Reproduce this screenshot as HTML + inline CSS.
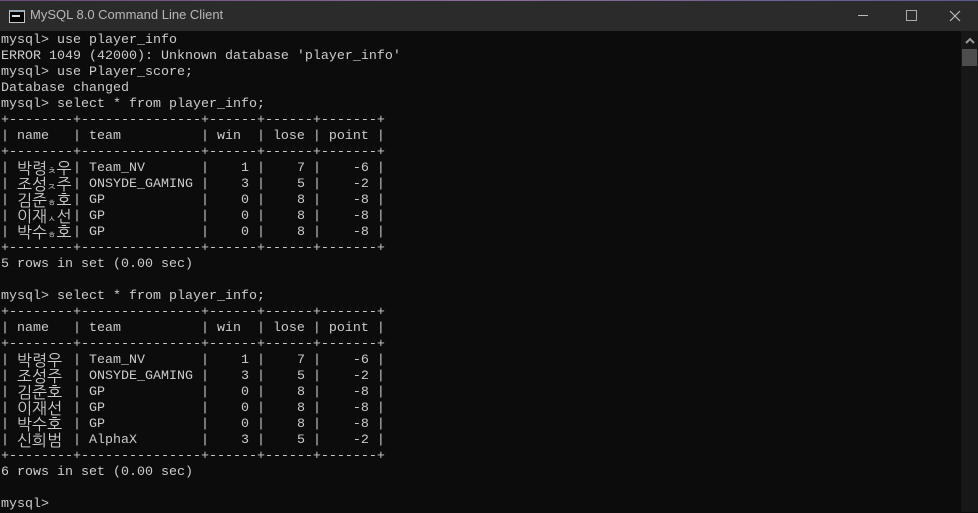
<!DOCTYPE html>
<html><head><meta charset="utf-8"><style>
html,body{margin:0;padding:0;width:978px;height:512px;overflow:hidden;background:#0c0c0c;}
.title{position:absolute;left:0;top:0;width:978px;height:31px;background:#2b2b2b;}
.title .t{position:absolute;left:30px;top:7px;font:13px "Liberation Sans","DejaVu Sans",sans-serif;color:#b8b8b8;}
.ico{position:absolute;left:9px;top:10px;width:14px;height:10px;background:#000;border:1px solid #c8c8c8;border-top:2px solid #9ab;}
.ico:after{content:"";position:absolute;left:2px;top:3px;width:8px;height:2px;background:#ddd;}
.accent{position:absolute;left:0;top:0;width:978px;height:1px;background:linear-gradient(90deg,#6a4a7a,#8a6aa0,#5a5a8a);}
.btn{position:absolute;top:0;width:46px;height:31px;}
.con{position:absolute;left:1px;top:33px;margin:0;font:13.33px "Liberation Mono",monospace;color:#cccccc;white-space:pre;}
.con div{height:16px;line-height:16px;overflow:visible;}
.k,.k2{display:inline-block;height:16px;line-height:16px;vertical-align:top;font-family:"NanumGothic","Noto Sans CJK KR",sans-serif;font-size:16px;white-space:nowrap;}
.k{width:48px;}
.k2{width:56px;}
.k2 i{font-style:normal;font-size:10px;}
.sb{position:absolute;left:961px;top:31px;width:17px;height:481px;background:#171717;}
.th{position:absolute;left:962px;top:49px;width:15px;height:17px;background:#4d4d4d;}
</style></head><body>
<div class="title"><div class="accent"></div><div class="ico"></div><div class="t">MySQL 8.0 Command Line Client</div>
<div class="btn" style="left:888px"><div style="position:absolute;left:18px;top:10px;width:9px;height:9px;border:1px solid #aaa"></div></div>
<div class="btn" style="left:858px"><div style="position:absolute;left:0;top:15px;width:10px;height:1px;background:#bbb"></div></div>
<svg style="position:absolute;left:949px;top:10px" width="12" height="12"><path d="M1 1L11 11M11 1L1 11" stroke="#bbb" stroke-width="1.2"/></svg>
</div>
<div class="sb"></div><div class="th"></div>
<svg style="position:absolute;left:965px;top:37px" width="10" height="7"><path d="M1 6L5 2L9 6" stroke="#999" stroke-width="2" fill="none"/></svg>
<div class="con"><div>mysql&gt; use player_info</div><div>ERROR 1049 (42000): Unknown database 'player_info'</div><div>mysql&gt; use Player_score;</div><div>Database changed</div><div>mysql&gt; select * from player_info;</div><div>+--------+---------------+------+------+-------+</div><div>| name   | team          | win  | lose | point |</div><div>+--------+---------------+------+------+-------+</div><div>| <span class="k2">박령<i>ㅊ</i>우</span>| Team_NV       |    1 |    7 |    -6 |</div><div>| <span class="k2">조성<i>ㅈ</i>주</span>| ONSYDE_GAMING |    3 |    5 |    -2 |</div><div>| <span class="k2">김준<i>ㅎ</i>호</span>| GP            |    0 |    8 |    -8 |</div><div>| <span class="k2">이재<i>ㅅ</i>선</span>| GP            |    0 |    8 |    -8 |</div><div>| <span class="k2">박수<i>ㅎ</i>호</span>| GP            |    0 |    8 |    -8 |</div><div>+--------+---------------+------+------+-------+</div><div>5 rows in set (0.00 sec)</div><div> </div><div>mysql&gt; select * from player_info;</div><div>+--------+---------------+------+------+-------+</div><div>| name   | team          | win  | lose | point |</div><div>+--------+---------------+------+------+-------+</div><div>| <span class="k">박령우</span> | Team_NV       |    1 |    7 |    -6 |</div><div>| <span class="k">조성주</span> | ONSYDE_GAMING |    3 |    5 |    -2 |</div><div>| <span class="k">김준호</span> | GP            |    0 |    8 |    -8 |</div><div>| <span class="k">이재선</span> | GP            |    0 |    8 |    -8 |</div><div>| <span class="k">박수호</span> | GP            |    0 |    8 |    -8 |</div><div>| <span class="k">신희범</span> | AlphaX        |    3 |    5 |    -2 |</div><div>+--------+---------------+------+------+-------+</div><div>6 rows in set (0.00 sec)</div><div> </div><div>mysql&gt;</div></div>
</body></html>
